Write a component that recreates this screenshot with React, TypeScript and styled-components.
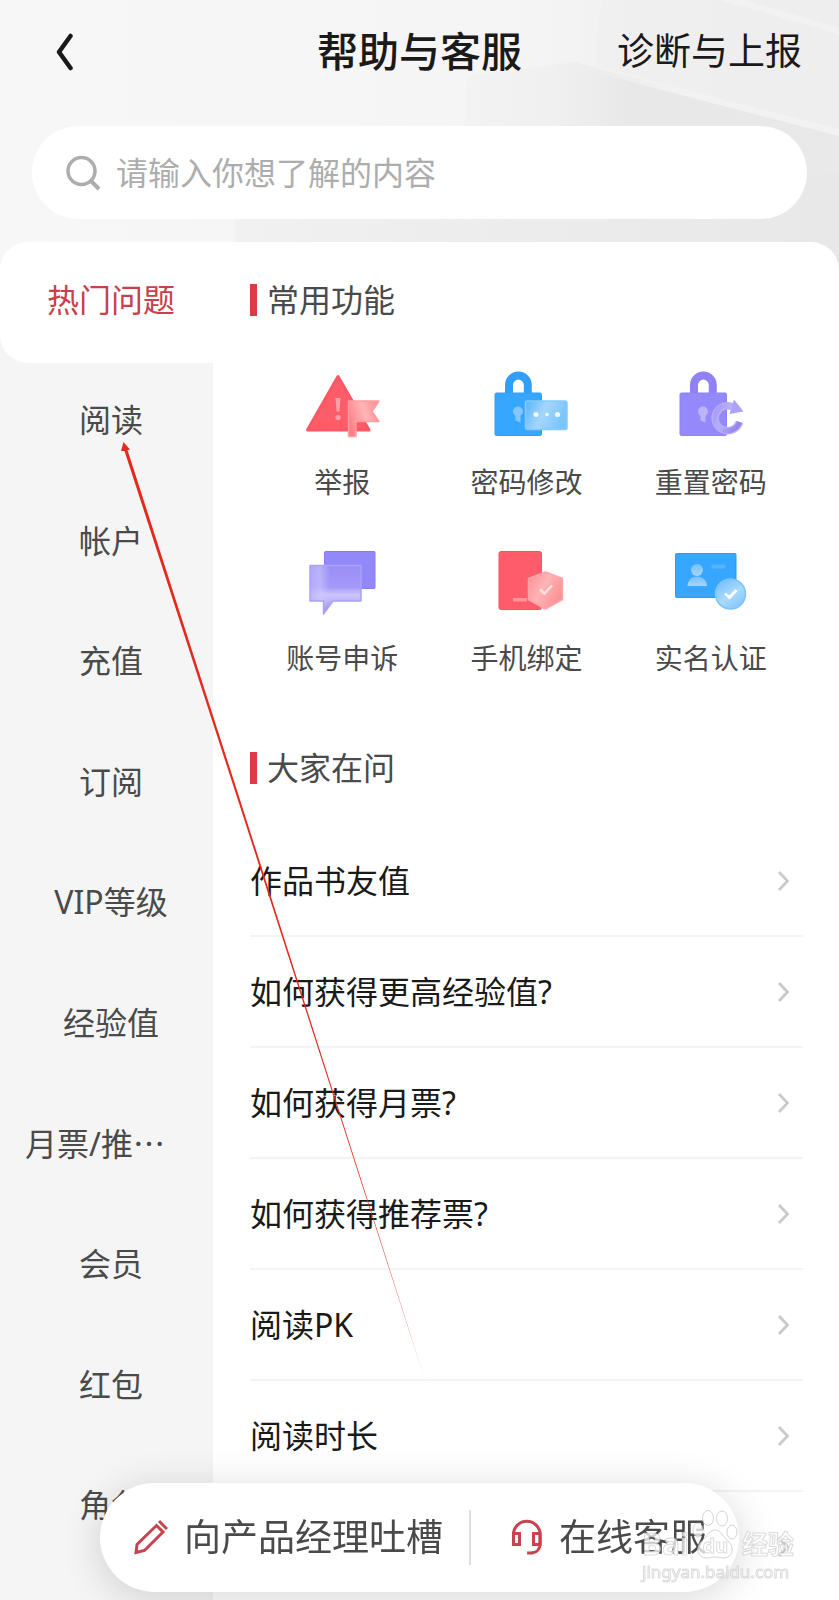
import React from 'react';
import styled, { createGlobalStyle } from 'styled-components';

const GlobalStyle = createGlobalStyle`
  *, *::before, *::after { box-sizing: border-box; }
  body {
    margin: 0;
    background: #fff;
    color: #1a1a1a;
    font-family: "Noto Sans", "Noto Sans CJK SC", sans-serif;
  }
  button, input {
    font: inherit;
    color: inherit;
    background: none;
    border: 0;
    padding: 0;
    margin: 0;
  }
  button { cursor: pointer; }
  h1, h2, ul { margin: 0; padding: 0; font-weight: 400; }
  ul { list-style: none; }
  svg { display: block; flex: none; }
`;

const Page = styled.div`
  position: relative;
  display: flex;
  flex-direction: column;
  height: 100vh;
  overflow: hidden;
  background: #f6f6f6;
`;

const Backdrop = styled.svg`
  position: absolute;
  top: 0;
  left: 0;
  width: 100%;
  height: 290px;
`;

const Header = styled.header`
  position: relative;
  display: grid;
  grid-template-columns: 1fr auto 1fr;
  align-items: center;
  height: 102px;
  padding: 0 37px;
`;

const BackButton = styled.button`
  justify-self: start;
  padding: 2px 19px 0;
`;

const Title = styled.h1`
  font-size: 41px;
  line-height: 48px;
  font-weight: 500;
`;

const HeaderLink = styled.a`
  justify-self: end;
  color: #1a1a1a;
  font-size: 37px;
  line-height: 48px;
  text-decoration: none;
  white-space: nowrap;
`;

const SearchBox = styled.label`
  position: relative;
  display: flex;
  align-items: center;
  gap: 15px;
  height: 93px;
  margin: 24px 32px 23px;
  padding: 0 34px;
  border-radius: 47px;
  background: #fff;
`;

const SearchInput = styled.input`
  flex: 1;
  min-width: 0;
  font-size: 32px;
  line-height: 48px;
  outline: 0;
  &::placeholder { color: #adadad; opacity: 1; }
`;

const Panel = styled.div`
  position: relative;
  display: flex;
  flex: 1;
  align-items: flex-start;
  border-radius: 28px 28px 0 0;
  background: #fff;
  overflow: hidden;
`;

const Sidebar = styled.nav`
  flex: none;
  align-self: stretch;
  width: 213px;
  background: #f5f5f5;
`;

const TabList = styled.ul`
  display: grid;
  grid-auto-rows: 1fr;
  height: 1326px;
`;

const Tab = styled.button<{ $active?: boolean }>`
  display: flex;
  justify-content: center;
  align-items: center;
  width: 100%;
  height: 100%;
  padding-left: 9px;
  padding-bottom: 5px;
  font-size: 32px;
  line-height: 40px;
  color: ${p => (p.$active ? '#c9404a' : '#4a4a4a')};
  background: ${p => (p.$active ? '#fff' : 'transparent')};
  border-bottom-left-radius: 28px;
`;

const TabLabel = styled.span<{ $clipped?: boolean }>`
  width: 172px;
  text-align: ${p => (p.$clipped ? 'left' : 'center')};
  white-space: nowrap;
`;

const Ellipsis = styled.span`
  font-family: "Noto Sans CJK SC", sans-serif;
  line-height: 1;
`;

const Content = styled.main`
  flex: 1;
  min-width: 0;
  padding: 41px 36px 0 37px;
`;

const SectionTitle = styled.h2`
  display: flex;
  align-items: center;
  gap: 10px;
  height: 33px;
  font-size: 32px;
  line-height: 32px;
  color: #4a4a4a;
  &::before {
    content: "";
    width: 7px;
    height: 32px;
    background: #dc3a45;
  }
`;

const FeatureGrid = styled.ul`
  display: grid;
  grid-template-columns: repeat(3, 1fr);
  row-gap: 46px;
  margin: 52px 0 77px;
`;

const Feature = styled.button`
  display: flex;
  flex-direction: column;
  align-items: center;
  gap: 26px;
  width: 100%;
  font-size: 28px;
  line-height: 32px;
  color: #4a4a4a;
`;

const QuestionList = styled.ul`
  margin-top: 42px;
`;

const Question = styled.button`
  display: flex;
  justify-content: space-between;
  align-items: center;
  width: 100%;
  height: 111px;
  padding-right: 13px;
  border-bottom: 2px solid #f4f4f4;
  font-size: 32px;
  line-height: 40px;
  text-align: left;
`;

const ActionBar = styled.div`
  position: fixed;
  left: 100px;
  right: 100px;
  bottom: 8px;
  display: flex;
  align-items: center;
  height: 109px;
  padding-left: 34px;
  border-radius: 55px;
  background: #fff;
  box-shadow: 0 6px 40px rgba(0, 0, 0, 0.16);
`;

const Action = styled.button`
  display: flex;
  align-items: center;
  gap: 16px;
  padding-bottom: 2px;
  font-size: 37px;
  line-height: 48px;
  color: #4a4a4a;
  white-space: nowrap;
`;

const Divider = styled.span`
  width: 2px;
  height: 55px;
  margin: 0 40px 0 26px;
  background: #dedede;
`;

const Arrow = styled.svg`
  position: absolute;
  top: 0;
  left: 0;
  pointer-events: none;
`;

const Watermark = styled.div`
  position: fixed;
  right: 45px;
  bottom: 16px;
  display: flex;
  flex-direction: column;
  width: 152px;
  color: rgba(255, 255, 255, 0.75);
  -webkit-text-stroke: 1px rgba(190, 190, 190, 0.55);
  pointer-events: none;
`;

const WatermarkBrand = styled.div`
  display: flex;
  justify-content: space-between;
  align-items: flex-end;
  font-size: 26px;
  line-height: 32px;
  font-weight: 700;
`;

const WatermarkLatin = styled.span`
  font-size: 30px;
`;

const Paw = styled.span`
  display: grid;
  width: 46px;
  height: 50px;
  svg, span { grid-area: 1 / 1; }
  span {
    align-self: end;
    justify-self: center;
    font-size: 20px;
    line-height: 28px;
  }
`;

const WatermarkUrl = styled.div`
  font-size: 17px;
  line-height: 24px;
`;

const ReportIcon = () => (
  <svg width="96" height="72" viewBox="0 0 96 72" aria-hidden="true">
    <defs>
      <linearGradient id="flag" x1="0" y1="0.6" x2="1" y2="0.2">
        <stop offset="0" stopColor="#ff7f87" />
        <stop offset="0.55" stopColor="#ffb5b7" />
        <stop offset="1" stopColor="#fd9095" />
      </linearGradient>
    </defs>
    <path d="M44 8.500 13.500 62H75Z" fill="#fd5c69" stroke="#fb5865" strokeWidth="3" strokeLinejoin="round" />
    <path d="M41.500 30h5l-1 13.500h-3z" fill="#ff9fa6" />
    <circle cx="44" cy="49.500" r="2.600" fill="#ff9fa6" />
    <path d="M54.500 33H85l-7 10.500L85 53.500H62V68.500H54.500Z" fill="url(#flag)" stroke="#ff9ca0" strokeWidth="1.500" strokeLinejoin="round" />
  </svg>
);

const LockBase = ({ color, edge, hole }: { color: string; edge: string; hole: string }) => (
  <g>
    <path d="M31 27V17a9.400 9.400 0 0 1 18.800 0V27" fill="none" stroke={edge} strokeWidth="8" />
    <rect x="17" y="25" width="46.500" height="42.500" rx="1.500" fill={color} stroke={edge} />
    <circle cx="40" cy="43.500" r="5" fill={hole} />
    <path d="M37.500 46h5v8.500l-5-2z" fill={hole} />
  </g>
);

const PasswordIcon = () => (
  <svg width="96" height="72" viewBox="0 0 96 72" aria-hidden="true">
    <defs>
      <linearGradient id="card" x1="0" y1="0" x2="1" y2="0.3">
        <stop offset="0" stopColor="#58b4fc" />
        <stop offset="0.5" stopColor="#a5d6fd" />
        <stop offset="1" stopColor="#7cc5fb" />
      </linearGradient>
    </defs>
    <LockBase color="#36a6ff" edge="#319ff8" hole="#82c6fa" />
    <rect x="47.500" y="33" width="41.500" height="28.500" rx="2" fill="url(#card)" stroke="#86cafb" strokeWidth="1.500" />
    <g fill="#f2faff">
      <circle cx="58" cy="46.500" r="2.500" />
      <circle cx="69" cy="46.500" r="1.800" />
      <circle cx="79.500" cy="46.500" r="2.500" />
    </g>
  </svg>
);

const ResetIcon = () => (
  <svg width="96" height="72" viewBox="0 0 96 72" aria-hidden="true">
    <defs>
      <linearGradient id="turn" x1="0" y1="0" x2="1" y2="0.6">
        <stop offset="0" stopColor="#a499fa" />
        <stop offset="0.5" stopColor="#b9affb" />
        <stop offset="1" stopColor="#9488ee" />
      </linearGradient>
    </defs>
    <LockBase color="#9488fb" edge="#8f83f3" hole="#bdb3fb" />
    <path d="M76.500 54A12.500 12.500 0 1 1 69 38.500" fill="none" stroke="#b9aefa" strokeWidth="7.500" />
    <path d="M76.500 54A12.500 12.500 0 1 1 69 38.500" fill="none" stroke="url(#turn)" strokeWidth="5" />
    <path d="M71 31.500 80.500 43.500 66.500 46Z" fill="#ada2f5" />
  </svg>
);

const AppealIcon = () => (
  <svg width="96" height="72" viewBox="0 0 96 72" aria-hidden="true">
    <defs>
      <linearGradient id="bubble" x1="0" y1="0" x2="0" y2="1">
        <stop offset="0" stopColor="#9a8ef8" />
        <stop offset="0.45" stopColor="#a499f9" />
        <stop offset="0.6" stopColor="#cbc4fc" />
        <stop offset="0.72" stopColor="#bfb6fb" />
        <stop offset="1" stopColor="#8074e2" />
      </linearGradient>
      <linearGradient id="bubbleSide" x1="0" y1="0" x2="1" y2="0">
        <stop offset="0" stopColor="#b9b0fa" stopOpacity="0.7" />
        <stop offset="0.2" stopColor="#d0c9fc" stopOpacity="0.6" />
        <stop offset="0.4" stopColor="#cbc4fc" stopOpacity="0" />
      </linearGradient>
    </defs>
    <rect x="30.500" y="7.500" width="50.500" height="37" rx="1" fill="#9388fa" stroke="#857aef" />
    <path d="M16 21.500H67V57H39L29.500 70V57H16Z" fill="url(#bubble)" />
    <path d="M16 21.500H67V57H39L29.500 70V57H16Z" fill="url(#bubbleSide)" stroke="#aaa1f9" strokeWidth="1.500" strokeLinejoin="round" />
  </svg>
);

const PhoneIcon = () => (
  <svg width="96" height="72" viewBox="0 0 96 72" aria-hidden="true">
    <defs>
      <linearGradient id="shield" x1="0" y1="0" x2="1" y2="0.6">
        <stop offset="0" stopColor="#ff8f95" />
        <stop offset="0.5" stopColor="#ffb3b5" />
        <stop offset="1" stopColor="#fb9196" />
      </linearGradient>
    </defs>
    <rect x="21" y="7.500" width="42.500" height="58" rx="2" fill="#fe5c6a" stroke="#f95261" />
    <rect x="35" y="54" width="14" height="3.500" fill="#ff949c" />
    <path d="M67.500 28 84.500 34.500V55.500L67.500 65 50.500 55.500V34.500Z" fill="url(#shield)" stroke="#ffa6a8" strokeWidth="1.500" strokeLinejoin="round" />
    <path d="M62 45.500 66.500 49.500 74 41.500" fill="none" stroke="#ffe2e2" strokeWidth="2.500" />
  </svg>
);

const IdentityIcon = () => (
  <svg width="96" height="72" viewBox="0 0 96 72" aria-hidden="true">
    <defs>
      <linearGradient id="person" x1="0" y1="0" x2="0" y2="1">
        <stop offset="0" stopColor="#76c0fa" />
        <stop offset="1" stopColor="#a6d6fb" />
      </linearGradient>
      <linearGradient id="badge" x1="0" y1="0" x2="0.7" y2="1">
        <stop offset="0" stopColor="#68bafb" />
        <stop offset="0.6" stopColor="#aad9fd" />
        <stop offset="1" stopColor="#84c7fa" />
      </linearGradient>
    </defs>
    <rect x="12.500" y="9.500" width="60.500" height="44" rx="1" fill="#36a6fe" stroke="#2b9cf5" />
    <circle cx="34" cy="26" r="6" fill="url(#person)" />
    <path d="M24.500 42c.5-6 4-9.500 9.500-9.500s9.500 3.500 10 9.500z" fill="url(#person)" />
    <rect x="48.500" y="20.500" width="14" height="4" rx="1" fill="#55b4fd" />
    <circle cx="67.500" cy="50" r="15" fill="url(#badge)" stroke="#7cc5fb" strokeWidth="1.500" />
    <path d="M62 49.500 66.500 53.500 73.500 46" fill="none" stroke="#fff" strokeWidth="3" />
  </svg>
);

const Chevron = () => (
  <svg width="13" height="22" viewBox="0 0 13 22" aria-hidden="true">
    <path d="M2 2 10.500 11 2 20" fill="none" stroke="#cacaca" strokeWidth="2.800" />
  </svg>
);

const tabs = ['阅读', '帐户', '充值', '订阅', 'VIP等级', '经验值', '月票/推…', '会员', '红包', '角色'];

const features = [
  { label: '举报', Icon: ReportIcon },
  { label: '密码修改', Icon: PasswordIcon },
  { label: '重置密码', Icon: ResetIcon },
  { label: '账号申诉', Icon: AppealIcon },
  { label: '手机绑定', Icon: PhoneIcon },
  { label: '实名认证', Icon: IdentityIcon },
];

const questions = ['作品书友值', '如何获得更高经验值?', '如何获得月票?', '如何获得推荐票?', '阅读PK', '阅读时长'];

const HeaderBackdrop = () => (
  <Backdrop viewBox="0 0 839 290" preserveAspectRatio="none" aria-hidden="true">
    <defs>
      <linearGradient id="sky" x1="0" y1="0" x2="1" y2="0">
        <stop offset="0" stopColor="#f7f7f7" />
        <stop offset="0.6" stopColor="#f5f5f5" />
        <stop offset="0.8" stopColor="#f0f0f0" />
        <stop offset="1" stopColor="#eeeeee" />
      </linearGradient>
      <linearGradient id="slope" x1="0" y1="0" x2="1" y2="0">
        <stop offset="0" stopColor="#f3f3f3" />
        <stop offset="0.25" stopColor="#f0f0f0" />
        <stop offset="0.45" stopColor="#e8e8e8" />
        <stop offset="1" stopColor="#e9e9e9" />
      </linearGradient>
      <linearGradient id="ridge" x1="0" y1="0" x2="1" y2="0">
        <stop offset="0" stopColor="#f2f2f2" stopOpacity="0" />
        <stop offset="0.4" stopColor="#f2f2f2" />
        <stop offset="1" stopColor="#f2f2f2" />
      </linearGradient>
      <linearGradient id="floor" x1="0" y1="0" x2="1" y2="0">
        <stop offset="0" stopColor="#f1f1f1" />
        <stop offset="0.35" stopColor="#ededed" />
        <stop offset="1" stopColor="#e8e8e8" />
      </linearGradient>
    </defs>
    <path d="M0 0H839V290H0Z" fill="url(#sky)" />
    <path d="M604 0H839V130L597 66Q594 25 604 0Z" fill="#ededed" fillOpacity="0.4" />
    <path d="M467 76 575 62 839 133V220H460Z" fill="url(#slope)" />
    <path d="M570 60 839 129V136L570 66Z" fill="url(#ridge)" />
    <path d="M720 0 839 34V28L745 0Z" fill="#f2f2f2" />
    <path d="M235 172H839V290H235Z" fill="url(#floor)" />
  </Backdrop>
);

export default function App() {
  return (
    <Page>
      <GlobalStyle />
      <HeaderBackdrop />
      <Header>
        <BackButton aria-label="返回">
          <svg width="17" height="38" viewBox="0 0 17 38" aria-hidden="true">
            <path d="M14.500 3 3 19 14.500 35" fill="none" stroke="#1a1a1a" strokeWidth="4.500" strokeLinecap="round" strokeLinejoin="round" />
          </svg>
        </BackButton>
        <Title>帮助与客服</Title>
        <HeaderLink href="#report">诊断与上报</HeaderLink>
      </Header>
      <SearchBox>
        <svg width="35" height="36" viewBox="0 0 35 36" aria-hidden="true">
          <circle cx="15.500" cy="16" r="13.500" fill="none" stroke="#adadad" strokeWidth="3.500" />
          <path d="M25 26 33 34" stroke="#adadad" strokeWidth="4" />
        </svg>
        <SearchInput type="text" aria-label="搜索" placeholder="请输入你想了解的内容" />
      </SearchBox>
      <Panel>
        <Sidebar>
          <TabList>
            <li><Tab $active><TabLabel>热门问题</TabLabel></Tab></li>
            {tabs.map(tab => {
              const clipped = tab.endsWith('…');
              return (
                <li key={tab}>
                  <Tab>
                    <TabLabel $clipped={clipped}>
                      {clipped ? tab.slice(0, -1) : tab}
                      {clipped && <Ellipsis lang="zh-CN">…</Ellipsis>}
                    </TabLabel>
                  </Tab>
                </li>
              );
            })}
          </TabList>
        </Sidebar>
        <Content>
          <SectionTitle>常用功能</SectionTitle>
          <FeatureGrid>
            {features.map(({ label, Icon }) => (
              <li key={label}><Feature><Icon />{label}</Feature></li>
            ))}
          </FeatureGrid>
          <SectionTitle>大家在问</SectionTitle>
          <QuestionList>
            {questions.map(q => (
              <li key={q}><Question>{q}<Chevron /></Question></li>
            ))}
            <li><Question aria-label="更多问题"><span /><Chevron /></Question></li>
          </QuestionList>
        </Content>
      </Panel>
      <ActionBar>
        <Action>
          <svg width="34" height="36" viewBox="0 0 34 36" fill="none" stroke="#c9434e" strokeWidth="3" aria-hidden="true">
            <path d="M22.500 6.500 29 13 10.500 31.500 2 33.500 3 25.500Z" />
            <path d="M25 2 33 10" />
          </svg>
          向产品经理吐槽
        </Action>
        <Divider />
        <Action>
          <svg width="32" height="36" viewBox="0 0 32 36" fill="none" stroke="#c9434e" strokeWidth="3" aria-hidden="true">
            <path d="M2.500 25.500V15.500a13.300 13.300 0 0 1 26.600 0V25c0 5.500-4 9-10 9h-3" />
            <path d="M2.500 14.500H8.500V25.500H2.500ZM29 14.500H22.500V25.500H29Z" />
          </svg>
          在线客服
        </Action>
      </ActionBar>
      <Arrow width="440" height="1400" viewBox="0 0 440 1400" aria-hidden="true">
        <path d="M123.500 442 130 449.500 127.500 450 238.500 795 425 1380 236.300 795 124.500 451 121 451Z" fill="#e52a1d" />
      </Arrow>
      <Watermark>
        <WatermarkBrand>
          <WatermarkLatin>Bai</WatermarkLatin>
          <Paw>
            <svg width="46" height="50" viewBox="0 0 46 50" fill="#fff" fillOpacity="0.75" stroke="#c0c0c0" strokeOpacity="0.7" aria-hidden="true">
              <ellipse cx="16" cy="8" rx="5.500" ry="7.500" />
              <ellipse cx="30" cy="8.500" rx="5.500" ry="7.500" />
              <ellipse cx="6" cy="20" rx="5" ry="7" />
              <ellipse cx="40" cy="22" rx="5" ry="7" />
              <path d="M23 20c6 0 8 7 14 12 6 6 3 16-5 16-4 0-6-1-9-1s-5 1-9 1C6 48 3 38 9 32c6-5 8-12 14-12Z" />
            </svg>
            <span>du</span>
          </Paw>
          <span>经验</span>
        </WatermarkBrand>
        <WatermarkUrl>jingyan.baidu.com</WatermarkUrl>
      </Watermark>
    </Page>
  );
}
